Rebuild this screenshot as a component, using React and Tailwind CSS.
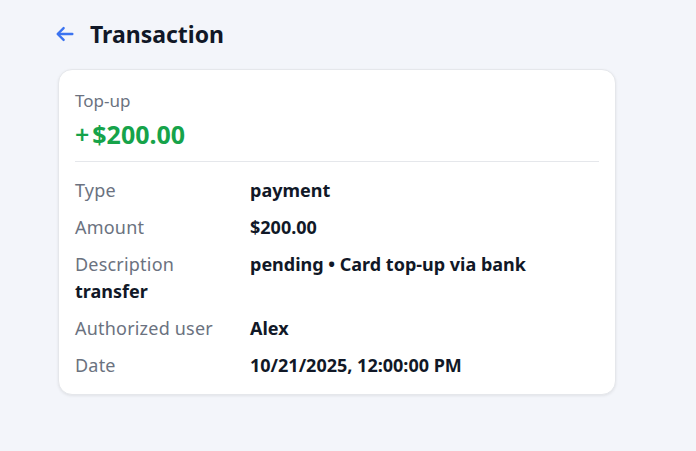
import React from "react";

const rows = [
  ["Type", "payment"],
  ["Amount", "$200.00"],
  ["Description", "pending • Card top-up via bank transfer"],
  ["Authorized user", "Alex"],
  ["Date", "10/21/2025, 12:00:00 PM"],
];

export default function App() {
  return (
    <div
      className="min-h-[451px] w-full bg-[#f3f5fa] pt-[18px]"
      style={{ fontFamily: '"Noto Sans", "Open Sans", sans-serif' }}
    >
      <div className="ml-[58px] w-[558px]">
        <div className="flex items-center gap-[14px] -ml-[4px] h-[32px]">
          <svg width="22" height="22" viewBox="0 0 24 24" fill="none" stroke="#3b73f0" strokeWidth="2.6" strokeLinecap="round" strokeLinejoin="round">
            <path d="M20 12H4.5" />
            <path d="M10.5 5.5L4 12l6.5 6.5" />
          </svg>
          <h1 className="text-[23px] font-bold text-[#111827] leading-none">Transaction</h1>
        </div>
        <div className="mt-[19px] rounded-[14px] border border-[#e5e7eb] bg-white px-[16px] pt-[20px] pb-[15px] shadow-[0_1px_3px_rgba(0,0,0,0.08)]">
          <div className="text-[17px] leading-[22px] text-[#6b7280]">Top-up</div>
          <div className="mt-[6px] text-[25px] font-bold leading-[32px] text-[#16a34a]">
            <span className="mr-[3px] font-semibold">+</span>$200.00
          </div>
          <div className="mt-[11px] border-t border-[#e5e7eb]" />
          <div className="mt-[15px] flex flex-col gap-[10px] text-[18px] leading-[27px]">
            {rows.map(([k, v]) => (
              <div key={k}>
                <span className="inline-block w-[175px] text-[#6b7280] tracking-[0.2px]">{k}</span>
                <span className="font-bold text-[#111827]">{v}</span>
              </div>
            ))}
          </div>
        </div>
      </div>
    </div>
  );
}
